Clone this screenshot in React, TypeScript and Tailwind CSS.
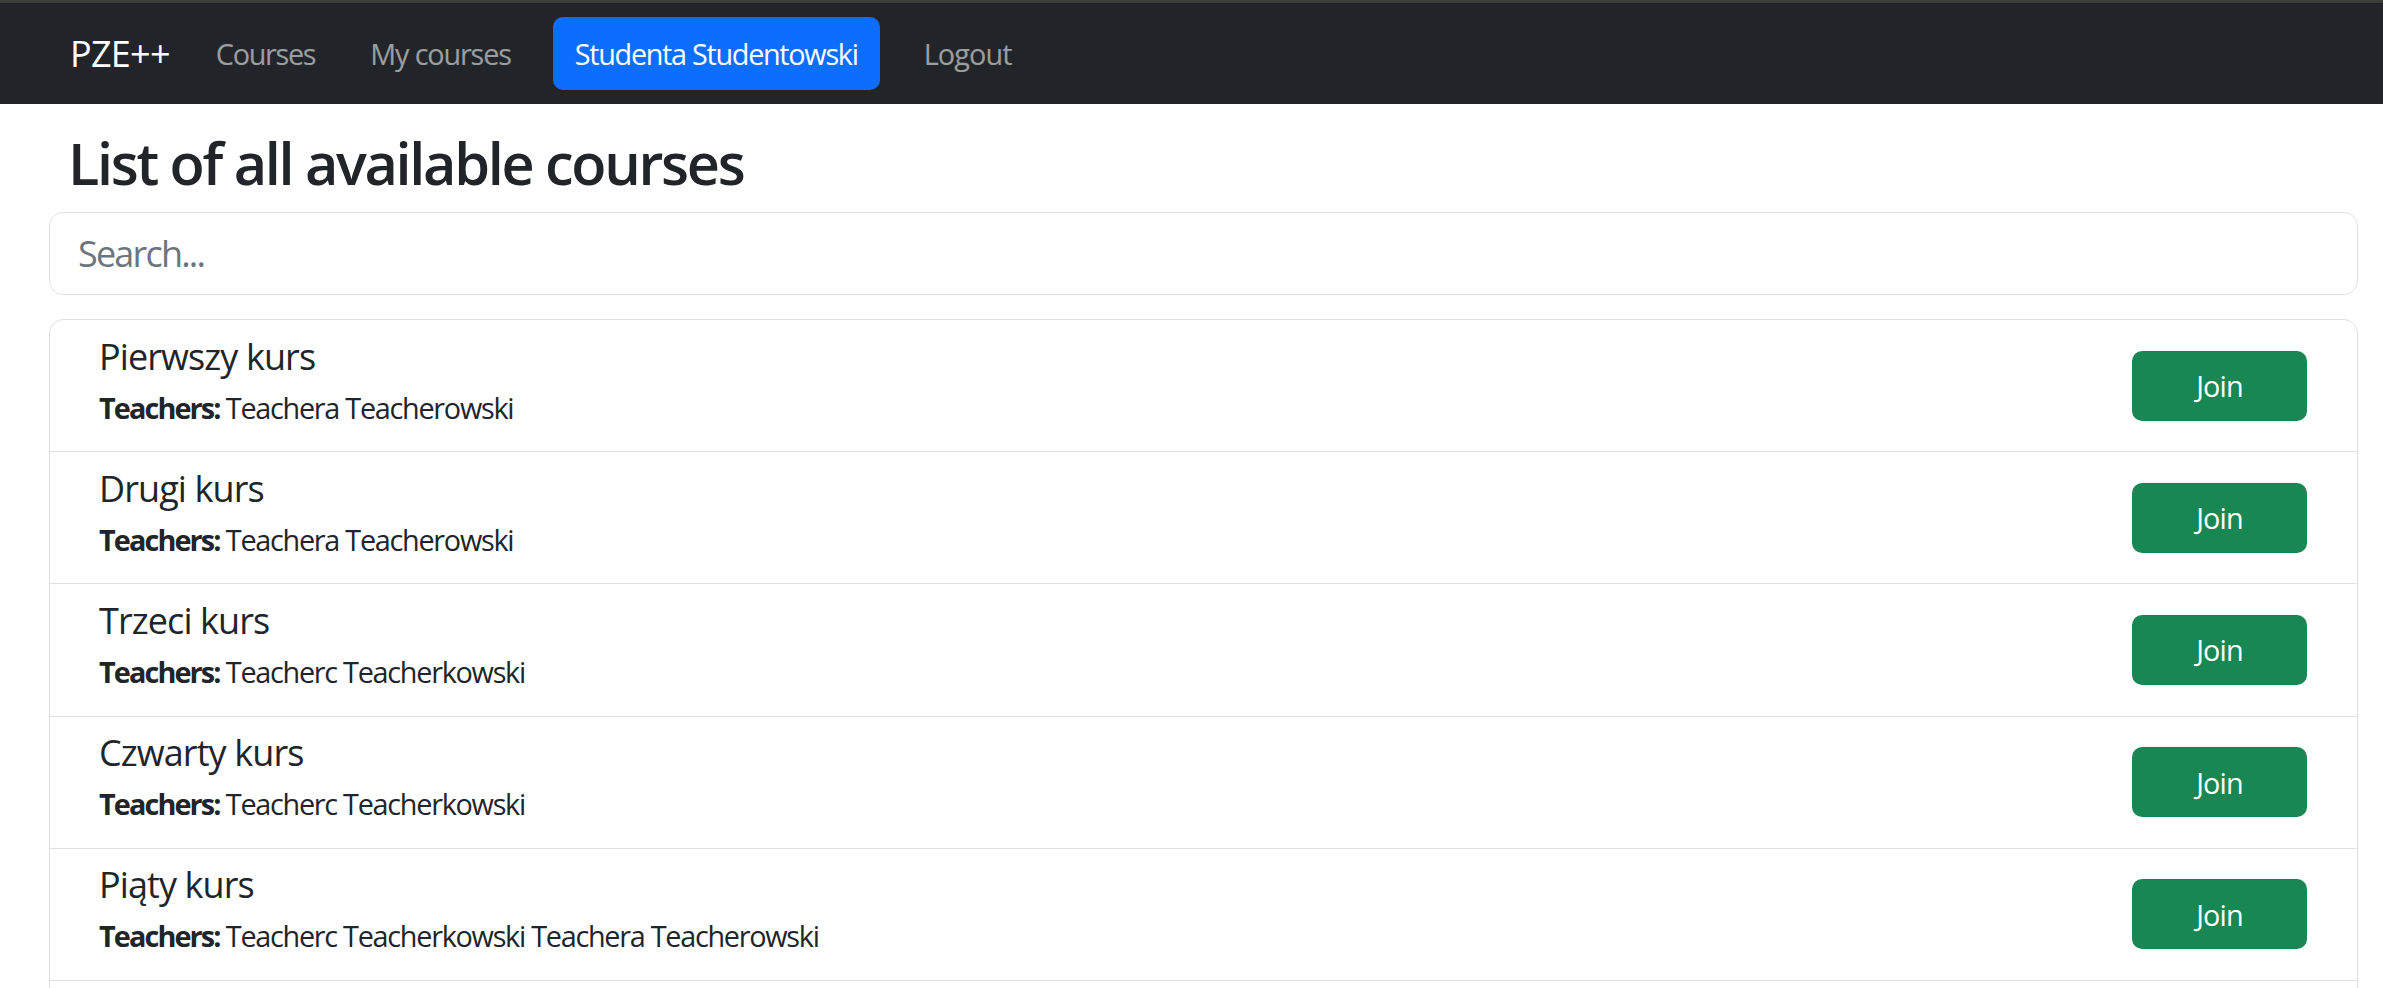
import React from "react";

const courses = [
  { id: 1, name: "Pierwszy kurs", teachers: "Teachera Teacherowski" },
  { id: 2, name: "Drugi kurs", teachers: "Teachera Teacherowski" },
  { id: 3, name: "Trzeci kurs", teachers: "Teacherc Teacherkowski" },
  { id: 4, name: "Czwarty kurs", teachers: "Teacherc Teacherkowski" },
  { id: 5, name: "Piąty kurs", teachers: "Teacherc Teacherkowski Teachera Teacherowski" },
  { id: 6, name: "Szósty kurs", teachers: "Teachera Teacherowski" },
];

export default function App() {
  return (
    <div className="min-h-screen bg-white font-['Open_Sans',sans-serif] text-[#212529]">
      <div className="h-[3px] bg-[#3b3e3a]" />
      <nav className="h-[101px] bg-[#212529] flex items-center pl-[70px]">
        <a href="#" className="text-[36px] text-white leading-none tracking-[-0.02em] mr-[46px]">
          PZE++
        </a>
        <a href="#" className="text-[28.8px] text-white/55 tracking-[-0.045em] mr-[55px]">
          Courses
        </a>
        <a href="#" className="text-[28.8px] text-white/55 tracking-[-0.04em] mr-[42px]">
          My courses
        </a>
        <a
          href="#"
          className="h-[73px] flex items-center px-[22px] rounded-[10px] bg-[#0d6efd] text-white text-[28.8px] tracking-[-0.045em] mr-[44px]"
        >
          Studenta Studentowski
        </a>
        <a href="#" className="text-[28.8px] text-white/55 tracking-[-0.03em]">
          Logout
        </a>
      </nav>

      <main className="pl-[49px] pr-[25px]">
        <h2 className="pl-[19px] pt-[24px] mb-[15px] text-[57.6px] font-semibold leading-[1.2] tracking-[-0.04em]">
          List of all available courses
        </h2>
        <input
          type="text"
          placeholder="Search..."
          className="w-full h-[83px] px-[28px] text-[36px] tracking-[-0.05em] border border-[#dee2e6] rounded-[14px] outline-none placeholder:text-[#6c757d]"
        />
        <ul className="mt-[24px] border border-[#dee2e6] rounded-t-[14px]">
          {courses.map((c) => (
            <li
              key={c.id}
              className="flex items-center justify-between pl-[49px] pr-[50px] border-b border-[#dee2e6]"
            >
              <div className="pt-[14.5px] pb-[22.3px]">
                <h5 className="text-[36px] leading-[1.2] tracking-[-0.025em] mb-[8px]">{c.name}</h5>
                <p className="text-[28.8px] leading-[1.5] tracking-[-0.044em]">
                  <strong className="font-bold tracking-[-0.065em]">Teachers:</strong> {c.teachers}
                </p>
              </div>
              <button className="w-[175px] h-[70px] rounded-[10px] bg-[#198754] text-white text-[28.8px] tracking-[-0.03em]">
                Join
              </button>
            </li>
          ))}
        </ul>
      </main>
    </div>
  );
}
